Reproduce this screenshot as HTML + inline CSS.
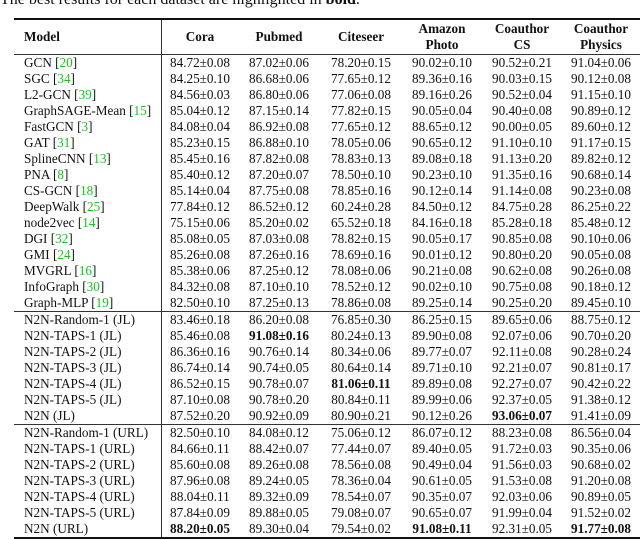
<!DOCTYPE html><html><head><style>
body{margin:0;width:640px;height:540px;overflow:hidden;background:#fff;font-family:"Liberation Serif",serif;color:#111;position:relative}
.cap{position:absolute;left:0;top:-9px;font-size:16px;white-space:nowrap}
table{position:absolute;left:14px;top:18px;border-collapse:collapse;font-size:13.2px;width:626px}
td{padding:0;height:16px;line-height:16px;text-align:center;white-space:nowrap}
td:first-child{text-align:left;padding-left:10px;width:137px;border-right:1px solid #333}
td:nth-child(2){width:76px}td:nth-child(3){width:82px}td:nth-child(4){width:82px}td:nth-child(5){width:80px}td:nth-child(6){width:80px}
tr.h td{height:34px;line-height:16px;font-weight:bold;border-bottom:1px solid #333;border-top:2px solid #111}
tr.g td{border-top:1px solid #333}
tr.last td{border-bottom:2px solid #111}
.c{color:#1ec21e}
</style></head><body>
<div class="cap">The best results for each dataset are highlighted in <b>bold</b>.</div>
<table>
<tr class="h"><td>Model</td><td>Cora</td><td>Pubmed</td><td>Citeseer</td><td>Amazon<br>Photo</td><td>Coauthor<br>CS</td><td>Coauthor<br>Physics</td></tr>
<tr><td>GCN [<span class="c">20</span>]</td><td>84.72±0.08</td><td>87.02±0.06</td><td>78.20±0.15</td><td>90.02±0.10</td><td>90.52±0.21</td><td>91.04±0.06</td></tr>
<tr><td>SGC [<span class="c">34</span>]</td><td>84.25±0.10</td><td>86.68±0.06</td><td>77.65±0.12</td><td>89.36±0.16</td><td>90.03±0.15</td><td>90.12±0.08</td></tr>
<tr><td>L2-GCN [<span class="c">39</span>]</td><td>84.56±0.03</td><td>86.80±0.06</td><td>77.06±0.08</td><td>89.16±0.26</td><td>90.52±0.04</td><td>91.15±0.10</td></tr>
<tr><td>GraphSAGE-Mean [<span class="c">15</span>]</td><td>85.04±0.12</td><td>87.15±0.14</td><td>77.82±0.15</td><td>90.05±0.04</td><td>90.40±0.08</td><td>90.89±0.12</td></tr>
<tr><td>FastGCN [<span class="c">3</span>]</td><td>84.08±0.04</td><td>86.92±0.08</td><td>77.65±0.12</td><td>88.65±0.12</td><td>90.00±0.05</td><td>89.60±0.12</td></tr>
<tr><td>GAT [<span class="c">31</span>]</td><td>85.23±0.15</td><td>86.88±0.10</td><td>78.05±0.06</td><td>90.65±0.12</td><td>91.10±0.10</td><td>91.17±0.15</td></tr>
<tr><td>SplineCNN [<span class="c">13</span>]</td><td>85.45±0.16</td><td>87.82±0.08</td><td>78.83±0.13</td><td>89.08±0.18</td><td>91.13±0.20</td><td>89.82±0.12</td></tr>
<tr><td>PNA [<span class="c">8</span>]</td><td>85.40±0.12</td><td>87.20±0.07</td><td>78.50±0.10</td><td>90.23±0.10</td><td>91.35±0.16</td><td>90.68±0.14</td></tr>
<tr><td>CS-GCN [<span class="c">18</span>]</td><td>85.14±0.04</td><td>87.75±0.08</td><td>78.85±0.16</td><td>90.12±0.14</td><td>91.14±0.08</td><td>90.23±0.08</td></tr>
<tr><td>DeepWalk [<span class="c">25</span>]</td><td>77.84±0.12</td><td>86.52±0.12</td><td>60.24±0.28</td><td>84.50±0.12</td><td>84.75±0.28</td><td>86.25±0.22</td></tr>
<tr><td>node2vec [<span class="c">14</span>]</td><td>75.15±0.06</td><td>85.20±0.02</td><td>65.52±0.18</td><td>84.16±0.18</td><td>85.28±0.18</td><td>85.48±0.12</td></tr>
<tr><td>DGI [<span class="c">32</span>]</td><td>85.08±0.05</td><td>87.03±0.08</td><td>78.82±0.15</td><td>90.05±0.17</td><td>90.85±0.08</td><td>90.10±0.06</td></tr>
<tr><td>GMI [<span class="c">24</span>]</td><td>85.26±0.08</td><td>87.26±0.16</td><td>78.69±0.16</td><td>90.01±0.12</td><td>90.80±0.20</td><td>90.05±0.08</td></tr>
<tr><td>MVGRL [<span class="c">16</span>]</td><td>85.38±0.06</td><td>87.25±0.12</td><td>78.08±0.06</td><td>90.21±0.08</td><td>90.62±0.08</td><td>90.26±0.08</td></tr>
<tr><td>InfoGraph [<span class="c">30</span>]</td><td>84.32±0.08</td><td>87.10±0.10</td><td>78.52±0.12</td><td>90.02±0.10</td><td>90.75±0.08</td><td>90.18±0.12</td></tr>
<tr><td>Graph-MLP [<span class="c">19</span>]</td><td>82.50±0.10</td><td>87.25±0.13</td><td>78.86±0.08</td><td>89.25±0.14</td><td>90.25±0.20</td><td>89.45±0.10</td></tr>
<tr class="g"><td>N2N-Random-1 (JL)</td><td>83.46±0.18</td><td>86.20±0.08</td><td>76.85±0.30</td><td>86.25±0.15</td><td>89.65±0.06</td><td>88.75±0.12</td></tr>
<tr><td>N2N-TAPS-1 (JL)</td><td>85.46±0.08</td><td><b>91.08±0.16</b></td><td>80.24±0.13</td><td>89.90±0.08</td><td>92.07±0.06</td><td>90.70±0.20</td></tr>
<tr><td>N2N-TAPS-2 (JL)</td><td>86.36±0.16</td><td>90.76±0.14</td><td>80.34±0.06</td><td>89.77±0.07</td><td>92.11±0.08</td><td>90.28±0.24</td></tr>
<tr><td>N2N-TAPS-3 (JL)</td><td>86.74±0.14</td><td>90.74±0.05</td><td>80.64±0.14</td><td>89.71±0.10</td><td>92.21±0.07</td><td>90.81±0.17</td></tr>
<tr><td>N2N-TAPS-4 (JL)</td><td>86.52±0.15</td><td>90.78±0.07</td><td><b>81.06±0.11</b></td><td>89.89±0.08</td><td>92.27±0.07</td><td>90.42±0.22</td></tr>
<tr><td>N2N-TAPS-5 (JL)</td><td>87.10±0.08</td><td>90.78±0.20</td><td>80.84±0.11</td><td>89.99±0.06</td><td>92.37±0.05</td><td>91.38±0.12</td></tr>
<tr><td>N2N (JL)</td><td>87.52±0.20</td><td>90.92±0.09</td><td>80.90±0.21</td><td>90.12±0.26</td><td><b>93.06±0.07</b></td><td>91.41±0.09</td></tr>
<tr class="g"><td>N2N-Random-1 (URL)</td><td>82.50±0.10</td><td>84.08±0.12</td><td>75.06±0.12</td><td>86.07±0.12</td><td>88.23±0.08</td><td>86.56±0.04</td></tr>
<tr><td>N2N-TAPS-1 (URL)</td><td>84.66±0.11</td><td>88.42±0.07</td><td>77.44±0.07</td><td>89.40±0.05</td><td>91.72±0.03</td><td>90.35±0.06</td></tr>
<tr><td>N2N-TAPS-2 (URL)</td><td>85.60±0.08</td><td>89.26±0.08</td><td>78.56±0.08</td><td>90.49±0.04</td><td>91.56±0.03</td><td>90.68±0.02</td></tr>
<tr><td>N2N-TAPS-3 (URL)</td><td>87.96±0.08</td><td>89.24±0.05</td><td>78.36±0.04</td><td>90.61±0.05</td><td>91.53±0.08</td><td>91.20±0.08</td></tr>
<tr><td>N2N-TAPS-4 (URL)</td><td>88.04±0.11</td><td>89.32±0.09</td><td>78.54±0.07</td><td>90.35±0.07</td><td>92.03±0.06</td><td>90.89±0.05</td></tr>
<tr><td>N2N-TAPS-5 (URL)</td><td>87.84±0.09</td><td>89.88±0.05</td><td>79.08±0.07</td><td>90.65±0.07</td><td>91.99±0.04</td><td>91.52±0.02</td></tr>
<tr class="last"><td>N2N (URL)</td><td><b>88.20±0.05</b></td><td>89.30±0.04</td><td>79.54±0.02</td><td><b>91.08±0.11</b></td><td>92.31±0.05</td><td><b>91.77±0.08</b></td></tr>
</table>
</body></html>
